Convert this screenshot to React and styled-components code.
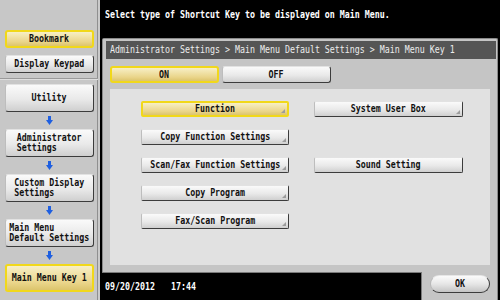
import React from 'react';
import styled, { createGlobalStyle, css } from 'styled-components';

const Global = createGlobalStyle`
  html, body { margin: 0; padding: 0; background: #000; }
  body { font-family: "DejaVu Sans Mono", "Liberation Mono", monospace; }
`;

const Screen = styled.div`
  width: 500px;
  height: 300px;
  display: flex;
  overflow: hidden;
  background: #000;
`;

const Txt = styled.span`
  display: inline-block;
  font-size: 10px;
  line-height: 10px;
  font-weight: ${p => (p.$light ? 'normal' : 'bold')};
  white-space: pre;
  text-align: left;
  transform: scaleX(0.83);
  transform-origin: ${p => p.$origin || 'center'};
`;

const Sidebar = styled.div`
  width: 100px;
  flex: none;
  box-sizing: border-box;
  background: #c7c7c7;
  border-right: 2px solid #cacaca;
  box-shadow: inset -1px 0 0 #8f8f8f;
  display: flex;
  flex-direction: column;
`;

const TopGroup = styled.div`
  height: 79px;
  box-sizing: border-box;
  padding: 30px 0 0 5px;
  display: flex;
  flex-direction: column;
  gap: 7px;
  border-bottom: 1px solid #9a9a9a;
  box-shadow: 0 1px 0 #dedede;
`;

const FlowGroup = styled.div`
  padding: 5px 0 0 5px;
  display: flex;
  flex-direction: column;
`;

const yellow = css`
  border: 2px solid #f1d81a;
  background: linear-gradient(#f7efc6, #ead58a 70%, #dcc46c);
`;

const grey = css`
  border: 1px solid;
  border-color: #e2e2e2 #3c3c3c #3c3c3c #bdbdbd;
  background: linear-gradient(#fafafa, #e9e9e9 55%, #cfcfcf);
`;

const SideButton = styled.div`
  width: 89px;
  height: ${p => (p.$tall ? 28 : 18)}px;
  box-sizing: border-box;
  display: flex;
  align-items: center;
  justify-content: center;
  border-radius: 3px;
  color: #111;
  ${p => (p.$active ? yellow : grey)}
`;

const ArrowSlot = styled.div`
  width: 89px;
  height: 17px;
  display: flex;
  align-items: center;
  justify-content: center;
`;

const Main = styled.div`
  flex: 1;
  display: flex;
  flex-direction: column;
  padding: 0 2px;
  min-width: 0;
`;

const Message = styled.div`
  height: 38px;
  box-sizing: border-box;
  padding: 3px 0 0 3px;
  color: #fff;
`;

const Panel = styled.div`
  flex: 1;
  display: flex;
  flex-direction: column;
  background: #c5c5c5;
  border: 1px solid #8a8a8a;
  border-bottom: none;
  border-radius: 2px 2px 0 0;
  padding: 2px 1px 0 3px;
`;

const Header = styled.div`
  height: 18px;
  background: #555;
  color: #ececec;
  display: flex;
  align-items: center;
  padding-left: 4px;
`;

const ToggleRow = styled.div`
  display: flex;
  gap: 3px;
  margin-top: 7px;
  padding-left: 4px;
`;

const Toggle = styled.div`
  width: 109px;
  height: 17px;
  box-sizing: border-box;
  display: flex;
  align-items: center;
  justify-content: center;
  border-radius: 3px;
  color: #111;
  ${p => (p.$active ? yellow : grey)}
`;

const Inner = styled.div`
  height: 176px;
  margin: 6px 6px 0 4px;
  background: #e1e1e1;
  box-sizing: border-box;
  padding: 12px 0 0 31px;
  display: grid;
  grid-template-columns: 148px 149px;
  grid-auto-rows: 16px;
  column-gap: 25px;
  row-gap: 12px;
`;

const KeyButton = styled.div`
  position: relative;
  box-sizing: border-box;
  display: flex;
  align-items: center;
  justify-content: center;
  border-radius: 2px;
  color: #111;
  grid-column: ${p => p.$col};
  grid-row: ${p => p.$row};
  ${p => (p.$active ? yellow : grey)}
  ${p =>
    p.$more &&
    css`
      &::after {
        content: '';
        position: absolute;
        right: 2px;
        bottom: 2px;
        border-left: 4px solid transparent;
        border-bottom: 4px solid #9c9c9c;
      }
    `}
`;

const BottomRow = styled.div`
  height: 28px;
  flex: none;
  display: flex;
`;

const Info = styled.div`
  flex: 1;
  display: flex;
  align-items: center;
  gap: 6px;
  padding-left: 3px;
  color: #fff;
  border-top: 1px solid #7a7a7a;
  border-right: 1px solid #7a7a7a;
`;

const Tab = styled.div`
  width: 76px;
  box-sizing: border-box;
  background: #c5c5c5;
  border-right: 1px solid #8a8a8a;
  padding: 3px 0 0 8px;
`;

const OkButton = styled.div`
  width: 60px;
  height: 18px;
  box-sizing: border-box;
  border-radius: 9px;
  border: 1px solid;
  border-color: #e6e6e6 #3c3c3c #3c3c3c #b8b8b8;
  background: linear-gradient(#fbfbfb, #e6e6e6 50%, #c4c4c4);
  display: flex;
  align-items: center;
  justify-content: center;
  color: #111;
`;

const DownArrow = () => (
  <svg width="7" height="9" viewBox="0 0 7 9">
    <rect x="2" y="0" width="3" height="4" fill="#1f5fe0" />
    <path d="M0 4 L7 4 L3.5 9 Z" fill="#1f5fe0" />
  </svg>
);

const flow = [
  { label: 'Utility' },
  { label: 'Administrator\nSettings' },
  { label: 'Custom Display\nSettings' },
  { label: 'Main Menu\nDefault Settings' },
  { label: 'Main Menu Key 1', active: true },
];

const keys = [
  { label: 'Function', col: 1, row: 1, active: true, more: true },
  { label: 'Copy Function Settings', col: 1, row: 2, more: true },
  { label: 'Scan/Fax Function Settings', col: 1, row: 3, more: true },
  { label: 'Copy Program', col: 1, row: 4, more: true },
  { label: 'Fax/Scan Program', col: 1, row: 5, more: true },
  { label: 'System User Box', col: 2, row: 1, more: true },
  { label: 'Sound Setting', col: 2, row: 3 },
];

export default function App() {
  return (
    <>
      <Global />
      <Screen>
        <Sidebar>
          <TopGroup>
            <SideButton $active><Txt>Bookmark</Txt></SideButton>
            <SideButton><Txt>Display Keypad</Txt></SideButton>
          </TopGroup>
          <FlowGroup>
            {flow.map((f, i) => (
              <React.Fragment key={f.label}>
                {i > 0 && (
                  <ArrowSlot><DownArrow /></ArrowSlot>
                )}
                <SideButton $tall $active={f.active}><Txt>{f.label}</Txt></SideButton>
              </React.Fragment>
            ))}
          </FlowGroup>
        </Sidebar>
        <Main>
          <Message>
            <Txt $origin="left">Select type of Shortcut Key to be displayed on Main Menu.</Txt>
          </Message>
          <Panel>
            <Header>
              <Txt $origin="left" $light>Administrator Settings &gt; Main Menu Default Settings &gt; Main Menu Key 1</Txt>
            </Header>
            <ToggleRow>
              <Toggle $active><Txt>ON</Txt></Toggle>
              <Toggle><Txt>OFF</Txt></Toggle>
            </ToggleRow>
            <Inner>
              {keys.map(k => (
                <KeyButton key={k.label} $col={k.col} $row={k.row} $active={k.active} $more={k.more}>
                  <Txt>{k.label}</Txt>
                </KeyButton>
              ))}
            </Inner>
          </Panel>
          <BottomRow>
            <Info>
              <Txt $origin="left">09/20/2012</Txt>
              <Txt $origin="left">17:44</Txt>
            </Info>
            <Tab>
              <OkButton><Txt>OK</Txt></OkButton>
            </Tab>
          </BottomRow>
        </Main>
      </Screen>
    </>
  );
}
